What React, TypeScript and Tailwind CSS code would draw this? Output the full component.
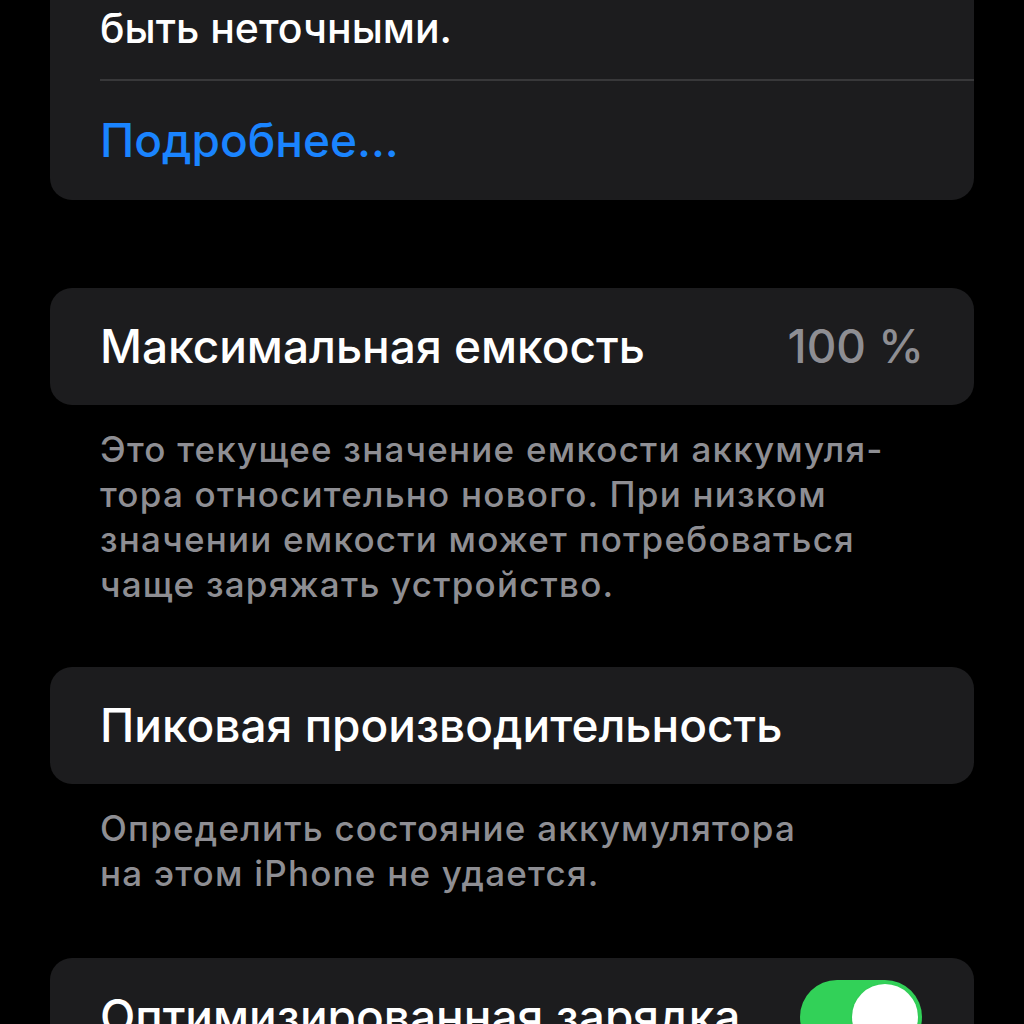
export default function App() {
  return (
    <div
      className="w-[1024px] h-[1024px] overflow-hidden bg-black text-white"
      style={{ fontFamily: "Inter, 'Noto Sans', sans-serif" }}
    >
      <div className="mx-[50px] mt-[-40px] flex flex-col">
        {/* info card, cut off at top */}
        <section className="rounded-[22px] bg-[#1c1c1e]">
          <p className="pl-[50px] pt-[46px] pb-[28px] text-[41px] leading-[45px] font-medium">
            быть неточными.
          </p>
          <div className="ml-[50px] h-[2px] bg-[#38383a]" />
          <div className="h-[119px] flex items-center pl-[50px]">
            <span className="text-[46px] font-medium text-[#1a84ff]">Подробнее...</span>
          </div>
        </section>

        <section className="mt-[88px] h-[117px] rounded-[22px] bg-[#1c1c1e] flex items-center justify-between px-[50px]">
          <span className="text-[46px] font-medium">Максимальная емкость</span>
          <span className="text-[46px] font-medium text-[#8e8e93]">100 %</span>
        </section>
        <p className="pt-[22px] pl-[50px] text-[35px] leading-[45px] tracking-[0.035em] font-medium text-[#8e8e93]">
          Это текущее значение емкости аккумуля-
          <br />
          тора относительно нового. При низком
          <br />
          значении емкости может потребоваться
          <br />
          чаще заряжать устройство.
        </p>

        <section className="mt-[60px] h-[117px] rounded-[22px] bg-[#1c1c1e] flex items-center px-[50px]">
          <span className="text-[46px] font-medium">Пиковая производительность</span>
        </section>
        <p className="pt-[22px] pl-[50px] text-[35px] leading-[45px] tracking-[0.035em] font-medium text-[#8e8e93]">
          Определить состояние аккумулятора
          <br />
          на этом iPhone не удается.
        </p>

        <section className="mt-[62px] h-[117px] rounded-[22px] bg-[#1c1c1e] flex items-center justify-between pl-[50px] pr-[52px]">
          <span className="text-[46px] font-medium">Оптимизированная зарядка</span>
          <div className="w-[122px] h-[74px] rounded-full bg-[#32d158] p-[4px] flex justify-end">
            <div className="w-[66px] h-[66px] rounded-full bg-white shadow" />
          </div>
        </section>
      </div>
    </div>
  );
}
